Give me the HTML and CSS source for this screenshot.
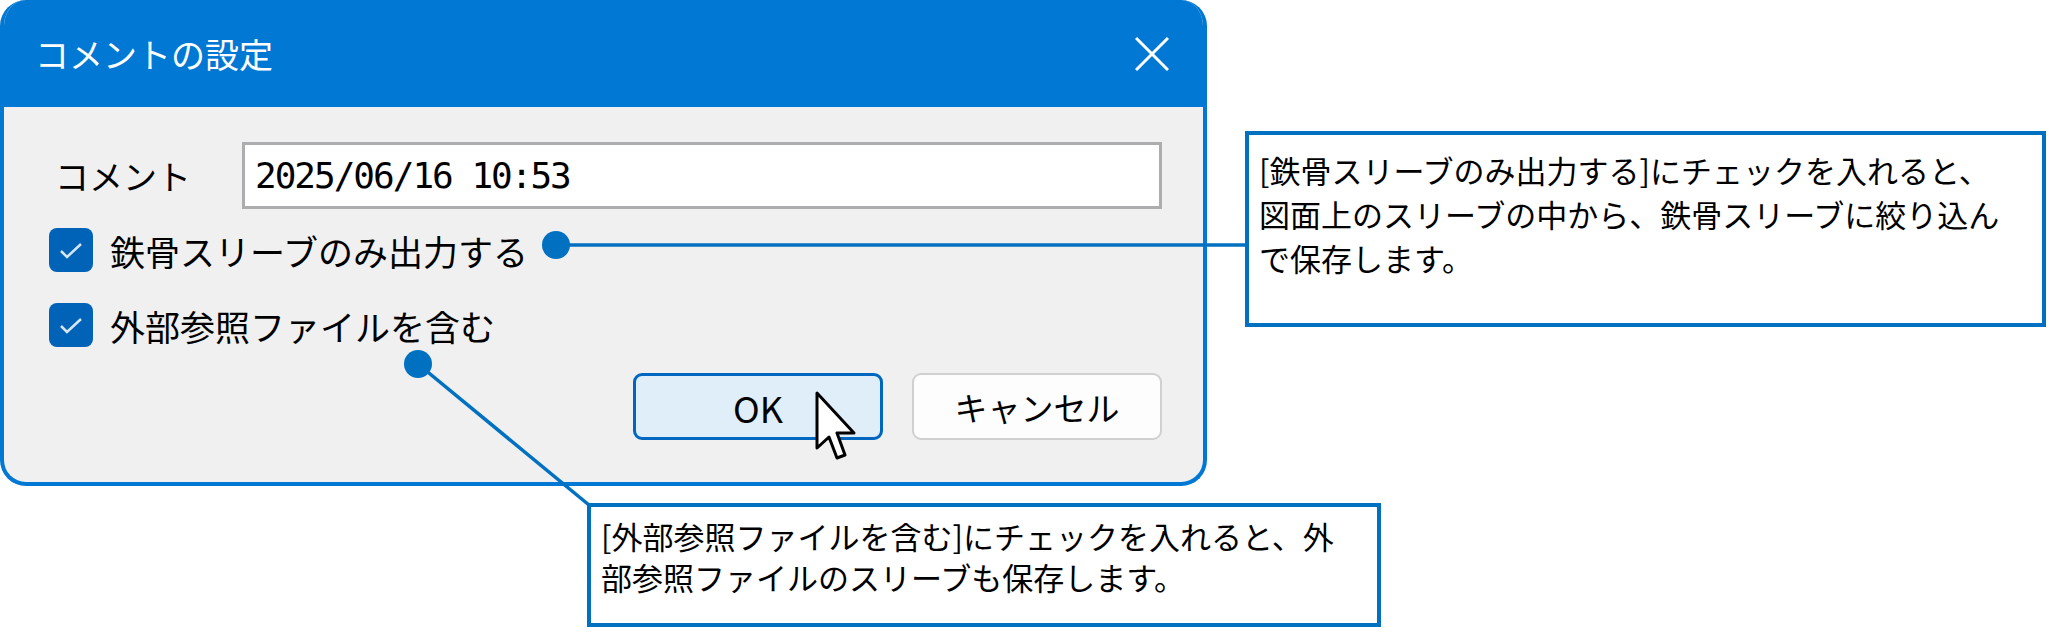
FILE: index.html
```html
<!DOCTYPE html>
<html lang="ja">
<head>
    <meta charset="UTF-8">
    <meta name="viewport" content="width=device-width, initial-scale=1.0">
    <title>コメントの設定</title>
    <link rel="stylesheet" href="styles.css">
</head>
<body>
    <div class="canvas">
        <div class="dialog">
            <div class="titlebar">
                <span class="title">コメントの設定</span>
                <svg class="close" width="34" height="34" viewBox="0 0 34 34">
                    <path d="M1 1 L33 33 M33 1 L1 33" stroke="#fff" stroke-width="3"/>
                </svg>
            </div>
            <div class="content">
                <div class="field">
                    <span class="field-label">コメント</span>
                    <div class="textbox">2025/06/16 10:53</div>
                </div>
                <div class="check">
                    <span class="checkbox">
                        <svg width="44" height="44" viewBox="0 0 44 44">
                            <path d="M12 23 L18 29 L32 16" fill="none" stroke="#d6e6f6" stroke-width="2.5"/>
                        </svg>
                    </span>
                    <span>鉄骨スリーブのみ出力する</span>
                </div>
                <div class="check check-2">
                    <span class="checkbox">
                        <svg width="44" height="44" viewBox="0 0 44 44">
                            <path d="M12 23 L18 29 L32 16" fill="none" stroke="#d6e6f6" stroke-width="2.5"/>
                        </svg>
                    </span>
                    <span>外部参照ファイルを含む</span>
                </div>
                <div class="buttons">
                    <button class="btn btn-ok">OK</button>
                    <button class="btn">キャンセル</button>
                </div>
            </div>
        </div>

        <!-- leader lines from the options to the notes -->
        <svg class="leaders" width="2049" height="633" viewBox="0 0 2049 633">
            <line x1="556" y1="245" x2="1247" y2="245" stroke="#0070c0" stroke-width="3.5"/>
            <circle cx="556" cy="245" r="14" fill="#0070c0"/>
            <line x1="418" y1="364" x2="589" y2="505" stroke="#0070c0" stroke-width="3.5"/>
            <circle cx="418" cy="364" r="14" fill="#0070c0"/>
        </svg>

        <div class="note note-1">
            [鉄骨スリーブのみ出力する]にチェックを入れると、<br>
            図面上のスリーブの中から、鉄骨スリーブに絞り込ん<br>
            で保存します。
        </div>
        <div class="note note-2">
            [外部参照ファイルを含む]にチェックを入れると、外<br>
            部参照ファイルのスリーブも保存します。
        </div>

        <svg class="cursor" width="42" height="72" viewBox="0 0 42 72">
            <path d="M2 2 V57 L14 46 L22 67 L30 64 L22 42 H39 Z" fill="#fff" stroke="#000" stroke-width="3" stroke-linejoin="round"/>
        </svg>
    </div>
</body>
</html>
```

FILE: styles.css
```css
body {
    margin: 0;
    background: #fff;
    font-family: "Noto Sans CJK JP", "Noto Sans", sans-serif;
}
.canvas {
    position: relative;
    width: 2049px;
    height: 633px;
    overflow: hidden;
}
.dialog {
    width: 1199px;
    border: 4px solid #0078d4;
    border-top: none;
    border-radius: 26px;
    overflow: hidden;
    background: #f0f0f0;
}
.titlebar {
    height: 107px;
    background: #0078d4;
    display: flex;
    align-items: center;
    justify-content: space-between;
    padding: 0 34px 0 31px;
}
.title {
    color: #fff;
    font-size: 34px;
}
.close {
    display: block;
}
.content {
    padding: 35px 41px 42px 45px;
    font-size: 35px;
    color: #000;
}
.field {
    display: flex;
    align-items: center;
}
.field-label {
    width: 187px;
    margin-left: 6px;
    font-size: 34px;
}
.textbox {
    flex: 1;
    height: 61px;
    border: 3px solid #adadb0;
    background: #fff;
    padding-left: 10px;
    display: flex;
    align-items: center;
    font-family: "DejaVu Sans Mono", monospace;
    font-size: 36px;
    letter-spacing: -2px;
}
.check {
    display: flex;
    align-items: center;
    gap: 17px;
    height: 44px;
    margin-top: 19px;
}
.check-2 {
    margin-top: 31px;
}
.checkbox {
    width: 44px;
    height: 44px;
    border-radius: 8px;
    background: #0063b8;
}
.checkbox svg {
    display: block;
}
.buttons {
    display: flex;
    justify-content: flex-end;
    gap: 29px;
    margin-top: 26px;
}
.btn {
    width: 250px;
    height: 67px;
    border: 2px solid #d0d0d0;
    border-radius: 9px;
    background: #fdfdfd;
    font-family: "Noto Sans CJK JP", sans-serif;
    font-size: 33px;
    color: #000;
    padding: 0;
}
.btn-ok {
    border: 3px solid #0067c0;
    background: #e0eef9;
    font-size: 36px;
}
.leaders {
    position: absolute;
    left: 0;
    top: 0;
    pointer-events: none;
}
.note {
    position: absolute;
    box-sizing: border-box;
    border: 4px solid #0070c0;
    background: #fff;
    padding: 0 10px;
    font-size: 31px;
    color: #000;
    white-space: nowrap;
}
.note-1 {
    left: 1245px;
    top: 131px;
    width: 801px;
    height: 196px;
    padding-top: 13px;
    line-height: 44px;
}
.note-2 {
    left: 587px;
    top: 503px;
    width: 794px;
    height: 124px;
    padding-top: 8px;
    line-height: 41px;
}
.cursor {
    position: absolute;
    left: 815px;
    top: 391px;
}
```
